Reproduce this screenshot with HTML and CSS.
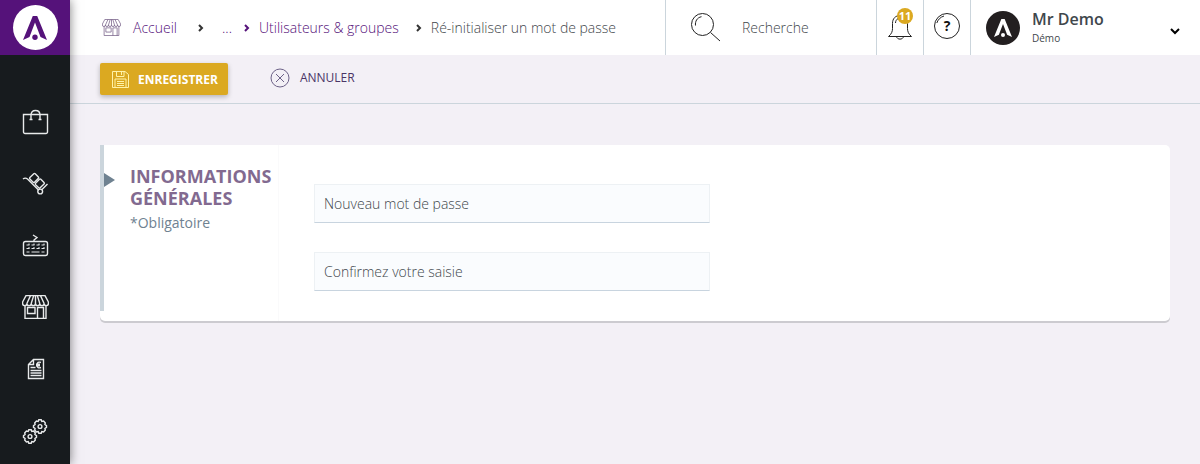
FILE: index.html
```html
<!DOCTYPE html>
<html lang="fr">
<head>
<meta charset="utf-8">
<meta name="viewport" content="width=device-width, initial-scale=1">
<title>Ré-initialiser un mot de passe</title>
<link rel="stylesheet" href="styles.css">
</head>
<body>
<svg class="sprite" aria-hidden="true">
  <symbol id="mark" viewBox="0 0 24 24">
    <path d="M9.800 0h4.400L24 24l-6.500-3L12 6.500 6.500 21 0 24z"/>
    <circle cx="12" cy="21.300" r="2.700"/>
  </symbol>
  <symbol id="shop" viewBox="0 0 27 24">
    <path d="M4 .6h19l3.400 6.400v1.500a2.100 2.100 0 0 1-4.300 0 2.100 2.100 0 0 1-4.300 0 2.100 2.100 0 0 1-4.300 0 2.100 2.100 0 0 1-4.300 0 2.100 2.100 0 0 1-4.300 0 2.100 2.100 0 0 1-4.300 0V7zM8.500.6 4.900 8.500M11.700.6 9.200 8.500M13.500.6v7.900M15.300.6l2.500 7.900M18.500.6l3.600 7.900M3 10.500v12.900h21V10.500M5.500 12.500h7.500v6H5.500zM15.500 23.400V12.500h6v10.900"/>
  </symbol>
</svg>
<div class="app">
  <nav class="sidebar" aria-label="Menu principal">
    <a class="logo" href="#" aria-label="Tableau de bord"><span class="logo-disc"><svg class="mark" width="24" height="24"><use href="#mark"/></svg></span></a>
    <ul class="menu">
      <li><a href="#" aria-label="Ventes"><svg class="line" width="28" height="28" viewBox="0 0 28 28"><path d="M2.500 7.500h24v17.500a1.500 1.500 0 0 1-1.500 1.500H4A1.500 1.500 0 0 1 2.500 25zM10 12V8c0-3 1.500-4.500 4.500-4.500S19 5 19 8v4M8.500 12.500h3M17.500 12.500h3"/></svg></a></li>
      <li><a href="#" aria-label="Livraisons"><svg class="line" width="28" height="28" viewBox="0 0 28 28"><path d="M2 10c1.500-1.200 3-1.200 4.500 0l11 11M21 20.500l5.500-5.500"/><g transform="translate(13.500 4) rotate(45)"><rect x="0" y="0" width="6.500" height="7.500" rx="1"/><rect x="8" y="0" width="6.500" height="7.500" rx="1"/></g><circle cx="19.200" cy="22.500" r="2.400"/></svg></a></li>
      <li><a href="#" aria-label="Saisie"><svg class="line" width="28" height="28" viewBox="0 0 28 28"><path d="M12 4l4 2.500-3 2.500v1.500"/><rect x="2.500" y="10.500" width="24" height="14" rx="2"/><path class="keys" d="M5.500 14h3M10.500 14h3M15.500 14h3M20.500 14h3M5.500 17.500h3M10.500 17.500h3M15.500 17.500h3M20.500 17.500h3M5.500 21h3M10.500 21h8M20.500 21h3M8 12.500V14M13 12.500V14M18 12.500V14M23 12.500V14M8 16v1.500M13 16v1.500M18 16v1.500M23 16v1.500"/></svg></a></li>
      <li><a href="#" aria-label="Boutique"><svg class="line" width="27" height="24"><use href="#shop"/></svg></a></li>
      <li><a href="#" aria-label="Facturation"><svg class="line" width="28" height="28" viewBox="0 0 28 28"><path d="M7.500 9.500 12.500 4.500h10v19h-15zM7.500 9.500h5v-5M9.500 12.500h5M9.500 15.500h11M9.500 18h11M9.500 20.500h11M20 7.500c-2.500-1-4 0-4 2.500s1.500 3.500 4 2.500M15 9.300h4M15 10.800h4"/></svg></a></li>
      <li><a href="#" aria-label="Configuration"><svg class="line" width="28" height="28" viewBox="0 0 28 28"><g id="gear"><path d="M17.800 2.800h2.400l.6 1.700 1.800-.4 1.700 1.800-.4 1.600 1.600 1.200v1.600l-1.600 1.200.4 1.600-1.700 1.800-1.800-.4-.6 1.700h-2.400l-.6-1.700-1.800.4-1.700-1.800.4-1.600-1.600-1.200V8.700l1.600-1.200-.4-1.600 1.700-1.800 1.800.4z"/><circle cx="19" cy="9.500" r="1.900"/></g><use href="#gear" transform="translate(-10 10)"/></svg></a></li>
    </ul>
  </nav>
  <div class="page">
    <header class="topbar">
      <nav class="breadcrumb" aria-label="Fil d'Ariane">
        <a class="home" href="#"><svg class="line thin" width="19" height="17"><use href="#shop"/></svg>Accueil</a>
        <svg class="chevron" width="6" height="8" viewBox="0 0 6 8"><path d="m1 1 3 3-3 3"/></svg>
        <span class="more">...</span>
        <svg class="chevron violet" width="6" height="8" viewBox="0 0 6 8"><path d="m1 1 3 3-3 3"/></svg>
        <a class="parent" href="#">Utilisateurs &amp; groupes</a>
        <svg class="chevron" width="6" height="8" viewBox="0 0 6 8"><path d="m1 1 3 3-3 3"/></svg>
        <span class="current" aria-current="page">Ré-initialiser un mot de passe</span>
      </nav>
      <form class="search" role="search">
        <svg class="line thin dark" width="30" height="30" viewBox="0 0 30 30"><circle cx="11.500" cy="11.500" r="11"/><path d="M4.500 12.500c-.5-4 1.500-8 6-8.800M19.500 19.500l9.500 8.500"/></svg>
        <input type="text" placeholder="Recherche" aria-label="Recherche">
      </form>
      <button class="tool" type="button" aria-label="Notifications">
        <svg class="line thin dark" width="26" height="30" viewBox="0 0 26 30"><path d="M1.500 23.500h23c-3-2.500-4-5-4-8v-5c0-5-3-8-7.500-8s-7.500 3-7.500 8v5c0 3-1 5.500-4 8zM9.500 23.500c.5 3.500 6.500 3.500 7 0M8.500 10c0-2 1-3.500 2.500-4.500"/></svg>
        <span class="badge">11</span>
      </button>
      <button class="tool" type="button" aria-label="Aide">
        <span class="help"><svg class="line thin dark" width="28" height="28" viewBox="0 0 28 28"><circle cx="14" cy="14" r="12.500"/><path d="M3.800 11c1-3 3.500-6 7.200-7"/></svg><span class="help-mark">?</span></span>
      </button>
      <button class="account" type="button">
        <span class="avatar"><svg class="mark" width="18" height="18"><use href="#mark"/></svg></span>
        <span class="who"><span class="name">Mr Demo</span><span class="role">Démo</span></span>
        <svg class="chevron caret" width="10" height="8" viewBox="0 0 10 8"><path d="m1 2 4 4 4-4"/></svg>
      </button>
    </header>
    <div class="actions">
      <button class="save" type="submit" form="reset">
        <svg class="disk" width="17" height="17" viewBox="0 0 17 17"><path d="M.5.500h12.500l3.500 3v13H.5zM4.500.500v5h7.500v-5M9.500.500v3.500M3 16.500V8h11v8.500M5 10.500h7M5 12.500h7M5 14.500h7"/></svg>
        Enregistrer
      </button>
      <a class="cancel" href="#"><svg width="20" height="20" viewBox="0 0 20 20"><circle cx="10" cy="10" r="9"/><path d="m6 6 8 8M14 6l-8 8"/></svg>Annuler</a>
    </div>
    <main class="content">
      <form class="card" id="reset">
        <div class="intro">
          <h2>Informations générales</h2>
          <p>*Obligatoire</p>
        </div>
        <div class="fields">
          <input type="password" placeholder="Nouveau mot de passe" aria-label="Nouveau mot de passe" required>
          <input type="password" placeholder="Confirmez votre saisie" aria-label="Confirmez votre saisie" required>
        </div>
      </form>
    </main>
  </div>
</div>
</body>
</html>
```

FILE: styles.css
```css
* { box-sizing: border-box; }

body {
  margin: 0;
  background: #f3f0f6;
  color: #3f474c;
  font: 300 14px/20px "Open Sans", "Noto Sans", sans-serif;
}

a { color: inherit; text-decoration: none; }
button, input { font: inherit; color: inherit; }
svg { display: block; flex: none; }

.sprite { position: absolute; width: 0; height: 0; }

.line { fill: none; stroke: currentColor; stroke-width: 1.4; }
.thin { stroke-width: 1; }
.dark { color: #222; }
.mark { fill: currentColor; }

.app { display: flex; min-height: 100vh; }

/* Sidebar */
.sidebar {
  z-index: 1;
  flex: none;
  width: 70px;
  background: #171b1e;
  color: #e8eaeb;
  box-shadow: 0 0 10px rgba(0, 0, 0, 0.5);
}
.logo {
  display: flex;
  align-items: center;
  justify-content: center;
  height: 55px;
  background: #55127a;
}
.logo-disc {
  display: flex;
  align-items: center;
  justify-content: center;
  width: 45px;
  height: 45px;
  border-radius: 50%;
  background: #fff;
  color: #55127a;
}
.menu { margin: 0; padding: 35px 0 0; list-style: none; }
.menu a {
  display: flex;
  align-items: center;
  justify-content: center;
  height: 62px;
}
.keys { stroke-width: 1; }

/* Top bar */
.page { flex: 1; min-width: 0; }
.topbar { display: flex; height: 55px; background: #fff; }
.breadcrumb {
  display: flex;
  flex: 1;
  align-items: center;
  padding-left: 32px;
  white-space: nowrap;
}
.home { display: flex; align-items: center; gap: 12px; margin-right: 21px; color: #55127a; }
.home svg { color: #6d5580; }
.more { margin: 0 12px 0 18px; color: #55127a; }
.parent { margin: 0 17px 0 9px; color: #55127a; }
.current { margin-left: 9px; }
.chevron { fill: none; stroke: #333; stroke-width: 2; }
.violet { stroke: #55127a; }

.search {
  display: flex;
  align-items: center;
  gap: 21px;
  width: 211px;
  padding-left: 25px;
  border-left: 1px solid #cbd5dc;
}
.search input {
  flex: 1;
  min-width: 0;
  padding: 0;
  border: 0;
  background: none;
  outline: none;
}
::placeholder { color: inherit; opacity: 1; }

.tool {
  position: relative;
  display: flex;
  align-items: center;
  justify-content: center;
  width: 47px;
  padding: 0;
  border: 0;
  border-left: 1px solid #cbd5dc;
  background: none;
}
.badge {
  position: absolute;
  top: 8px;
  left: 20px;
  width: 16px;
  height: 16px;
  border-radius: 50%;
  background: #dba921;
  color: #fff;
  font-size: 11px;
  font-weight: 700;
  line-height: 16px;
  text-align: center;
}
.help { display: grid; place-items: center; padding-bottom: 4px; }
.help > * { grid-area: 1 / 1; }
.help-mark { color: #111; font-weight: 700; }

.account {
  display: flex;
  align-items: center;
  gap: 12px;
  width: 230px;
  padding: 0 20px 0 15px;
  border: 0;
  border-left: 1px solid #cbd5dc;
  background: none;
  text-align: left;
}
.avatar {
  display: flex;
  align-items: center;
  justify-content: center;
  width: 34px;
  height: 34px;
  border-radius: 50%;
  background: #231f20;
  color: #fff;
}
.who { display: flex; flex: 1; flex-direction: column; padding-bottom: 2px; }
.name { font-size: 16px; font-weight: 600; line-height: 22px; }
.role { font-size: 10px; font-weight: 400; line-height: 16px; }
.caret { margin-top: 6px; stroke: #000; }

/* Actions */
.actions {
  display: flex;
  align-items: flex-start;
  gap: 42px;
  height: 49px;
  padding: 8px 30px;
  border-bottom: 1px solid #cbd5dc;
}
.save, .cancel {
  display: flex;
  align-items: center;
  gap: 9px;
  font-size: 12px;
  line-height: 16px;
  text-transform: uppercase;
}
.save {
  height: 32px;
  padding: 1px 10px 0 12px;
  border: 0;
  border-radius: 2px;
  background: #dba921;
  box-shadow: 0 2px 5px rgba(0, 0, 0, 0.25);
  color: #fff;
  font-weight: 700;
}
.disk { fill: none; stroke: #fff3a8; }
.cancel { height: 30px; gap: 10px; color: #4a3566; font-weight: 400; }
.cancel svg { fill: none; stroke: #6d6288; }

/* Form card */
.content { padding: 41px 30px; }
.card {
  position: relative;
  display: flex;
  border-radius: 5px;
  background: #fff;
  box-shadow: 0 2px 0 #cccbd0;
}
.card::before {
  content: "";
  position: absolute;
  top: 0;
  bottom: 10px;
  left: 0;
  width: 4px;
  background: #cbd5dc;
}
.card::after {
  content: "";
  position: absolute;
  top: 28px;
  left: 4px;
  border: 7px solid transparent;
  border-right: 0;
  border-left: 11px solid #6f8291;
}
.intro {
  width: 179px;
  padding: 20px 0 0 30px;
  border-right: 1px solid #fafafb;
}
.intro h2 {
  margin: 0;
  color: #826a90;
  font-size: 18px;
  font-weight: 700;
  line-height: 22px;
  text-transform: uppercase;
}
.intro p { margin: 4px 0 0; color: #6f8291; font-weight: 400; }
.fields {
  display: flex;
  flex: 1;
  flex-direction: column;
  gap: 29px;
  padding: 39px 0 30px 35px;
}
.fields input {
  width: 396px;
  max-width: 100%;
  height: 39px;
  padding: 0 9px;
  border: 1px solid #edf1f4;
  border-bottom-color: #c8d4df;
  border-radius: 0;
  background: #fafcfe;
}
```
